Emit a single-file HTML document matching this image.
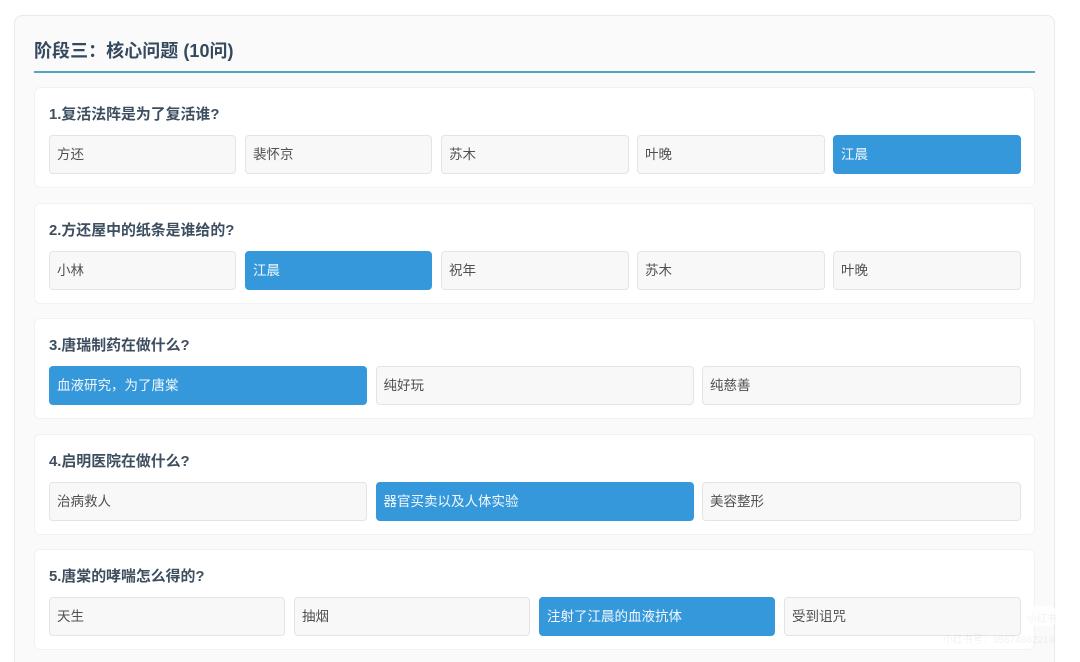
<!DOCTYPE html>
<html lang="zh">
<head>
<meta charset="utf-8">
<style>
html,body{margin:0;padding:0;width:1080px;height:662px;overflow:hidden;background:#fff;font-family:"Liberation Sans","Noto Sans CJK SC",sans-serif}
*{box-sizing:border-box}
#page{position:relative;width:1080px;height:662px;overflow:hidden;background:#fff}
.wrap{position:absolute;left:14px;top:15px;width:1041px;height:647px;background:#fafafa;border:1px solid #e9e9e9;border-bottom:0;border-radius:8px 8px 0 0}
h2{position:absolute;left:34px;top:39px;margin:0;font-size:18px;line-height:24px;font-weight:700;color:#34495e;letter-spacing:.04px}
.rule{position:absolute;left:34px;top:71px;width:1001px;height:2px;background:#55a5c0}
.q{position:absolute;left:34px;width:1001px;height:101px;background:#fff;border:1px solid #f2f2f2;border-radius:6px}
.t{position:absolute;left:14px;top:17px;font-size:14.9px;line-height:20px;font-weight:700;color:#3d4e5f}
.o{position:absolute;top:47px;left:14px;width:972px;height:38.5px;display:grid}
.c5{grid-template-columns:187px 187px 187.5px 187.5px 188px;column-gap:9px;gap:0}
.c5 div:nth-child(1),.c5 div:nth-child(2){margin-right:0}
.c5{grid-template-columns:187px 9px 187px 9px 187.5px 8.5px 187.5px 8.5px 188px}
.c5 div:nth-child(1){grid-column:1}
.c5 div:nth-child(2){grid-column:3}
.c5 div:nth-child(3){grid-column:5}
.c5 div:nth-child(4){grid-column:7}
.c5 div:nth-child(5){grid-column:9}
.c3{grid-template-columns:318px 318px 319px;column-gap:8.5px}
.c4{grid-template-columns:236px 236px 236px 237px;column-gap:9px}
.o div{height:38.5px;background:#f8f8f8;border:1px solid #e4e4e4;border-radius:4px;padding:0 7px;font-size:13.5px;line-height:37.5px;color:#505050}
.o div.s{background:#3498db;border-color:#3498db;color:#f4f9fd}
.wm{position:absolute;color:#000;opacity:.05;font-size:10px;white-space:nowrap}
.pill{position:absolute;left:1024px;top:606px;width:34px;height:20px;background:#fff;border-radius:10px;opacity:.75}
</style>
</head>
<body>
<div id="page">
<div class="wrap"></div>
<h2>阶段三：核心问题 (10问)</h2>
<div class="rule"></div>

<div class="q" style="top:87px">
  <div class="t">1.复活法阵是为了复活谁?</div>
  <div class="o c5"><div>方还</div><div>裴怀京</div><div>苏木</div><div>叶晚</div><div class="s">江晨</div></div>
</div>

<div class="q" style="top:203px">
  <div class="t">2.方还屋中的纸条是谁给的?</div>
  <div class="o c5"><div>小林</div><div class="s">江晨</div><div>祝年</div><div>苏木</div><div>叶晚</div></div>
</div>

<div class="q" style="top:318px">
  <div class="t">3.唐瑞制药在做什么?</div>
  <div class="o c3"><div class="s">血液研究，为了唐棠</div><div>纯好玩</div><div>纯慈善</div></div>
</div>

<div class="q" style="top:434px">
  <div class="t">4.启明医院在做什么?</div>
  <div class="o c3"><div>治病救人</div><div class="s">器官买卖以及人体实验</div><div>美容整形</div></div>
</div>

<div class="q" style="top:549px">
  <div class="t">5.唐棠的哮喘怎么得的?</div>
  <div class="o c4"><div>天生</div><div>抽烟</div><div class="s">注射了江晨的血液抗体</div><div>受到诅咒</div></div>
</div>

<div class="pill"></div>
<div class="wm" style="left:1027px;top:610px">小红书</div>
<div class="wm" style="left:943px;top:631px">小红书号：95574862219</div>
</div>
</body>
</html>
